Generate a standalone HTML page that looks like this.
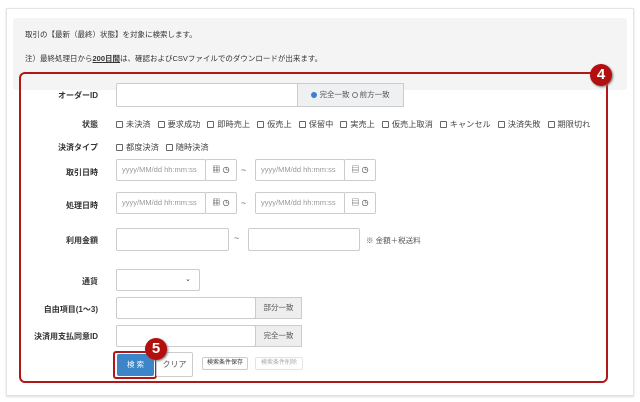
<html><head><style>
*{box-sizing:border-box;margin:0;padding:0}
body{width:640px;height:402px;background:#fff;font-family:"Liberation Sans","Noto Sans CJK JP",sans-serif;color:#333;position:relative;overflow:hidden;font-size:8px}
.a{position:absolute}
.panel{left:6px;top:8px;width:628px;height:388px;border:1px solid #e4e4e4;box-shadow:0 1px 2px #ddd}
.info{left:13px;top:18px;width:614px;height:72px;background:#f4f4f4;border-radius:3px}
.red{left:19px;top:72px;width:589px;height:311px;border:2px solid #b01818;border-radius:6px}
.badge{width:22px;height:22px;border-radius:50%;background:#b30f0f;color:#fff;font-weight:bold;font-size:15px;text-align:center;line-height:22px;box-shadow:1px 1px 2px #777}
.lbl{width:80px;text-align:right;left:18px;font-size:8px;font-weight:bold;color:#333}
.in{border:1px solid #ccc;background:#fff;border-radius:2px}
.add{border:1px solid #ccc;background:#eee;color:#555;font-size:7.5px;text-align:center}
.ph{color:#999;font-size:7.5px;padding-left:5px}
.cb{display:inline-block;width:7px;height:7px;border:1px solid #666;border-radius:1px;margin:0 3px 0 7px;vertical-align:-1px}
.row{font-size:8.2px;color:#444}
</style></head><body>
<div class="a panel"></div>
<div class="a info"></div>
<div class="a" style="left:25px;top:29px;font-size:7.5px">取引の【最新（最終）状態】を対象に検索します。</div>
<div class="a" style="left:25px;top:53px;font-size:7.5px">注）最終処理日から<b style="text-decoration:underline">200日間</b>は、確認およびCSVファイルでのダウンロードが出来ます。</div>
<div class="a red"></div>
<div class="a badge" style="left:590px;top:64px">4</div>

<div class="a lbl" style="top:90px">オーダーID</div>
<div class="a in" style="left:116px;top:83px;width:182px;height:24px"></div>
<div class="a add" style="left:297px;top:83px;width:107px;height:24px;line-height:22px;background:#eef0f2"><span style="display:inline-block;width:6px;height:6px;border-radius:50%;background:#3a7fd0;vertical-align:-1px"></span> 完全一致 <span style="display:inline-block;width:6px;height:6px;border-radius:50%;border:1px solid #777;vertical-align:-1px"></span> 前方一致</div>

<div class="a lbl" style="top:119px">状態</div>
<div class="a row" style="left:109px;top:118px"><span class="cb"></span>未決済<span class="cb"></span>要求成功<span class="cb"></span>即時売上<span class="cb"></span>仮売上<span class="cb"></span>保留中<span class="cb"></span>実売上<span class="cb"></span>仮売上取消<span class="cb"></span>キャンセル<span class="cb"></span>決済失敗<span class="cb"></span>期限切れ</div>

<div class="a lbl" style="top:142px">決済タイプ</div>
<div class="a row" style="left:109px;top:141px"><span class="cb"></span>都度決済<span class="cb"></span>随時決済</div>

<div class="a lbl" style="top:167px">取引日時</div>
<div class="a in ph" style="left:116px;top:159px;width:90px;height:22px;line-height:20px">yyyy/MM/dd hh:mm:ss</div>
<div class="a in" style="left:205px;top:159px;width:32px;height:22px;font-size:8px;line-height:20px;text-align:center">▦ ◷</div>
<div class="a" style="left:241px;top:165px;font-size:9px;color:#666">~</div>
<div class="a in ph" style="left:255px;top:159px;width:90px;height:22px;line-height:20px">yyyy/MM/dd hh:mm:ss</div>
<div class="a in" style="left:344px;top:159px;width:32px;height:22px;font-size:8px;line-height:20px;text-align:center">▤ ◷</div>

<div class="a lbl" style="top:200px">処理日時</div>
<div class="a in ph" style="left:116px;top:192px;width:90px;height:22px;line-height:20px">yyyy/MM/dd hh:mm:ss</div>
<div class="a in" style="left:205px;top:192px;width:32px;height:22px;font-size:8px;line-height:20px;text-align:center">▦ ◷</div>
<div class="a" style="left:241px;top:198px;font-size:9px;color:#666">~</div>
<div class="a in ph" style="left:255px;top:192px;width:90px;height:22px;line-height:20px">yyyy/MM/dd hh:mm:ss</div>
<div class="a in" style="left:344px;top:192px;width:32px;height:22px;font-size:8px;line-height:20px;text-align:center">▤ ◷</div>

<div class="a lbl" style="top:235px">利用金額</div>
<div class="a in" style="left:116px;top:228px;width:113px;height:23px"></div>
<div class="a" style="left:234px;top:233px;font-size:9px;color:#666">~</div>
<div class="a in" style="left:248px;top:228px;width:112px;height:23px"></div>
<div class="a" style="left:366px;top:235px;font-size:7.5px;color:#555">※ 金額＋税送料</div>

<div class="a lbl" style="top:276px">通貨</div>
<div class="a in" style="left:116px;top:269px;width:84px;height:22px;font-size:7px;text-align:right;padding-right:8px;line-height:20px">⌄</div>

<div class="a lbl" style="top:304px">自由項目(1～3)</div>
<div class="a in" style="left:116px;top:297px;width:140px;height:22px"></div>
<div class="a add" style="left:255px;top:297px;width:47px;height:22px;line-height:20px">部分一致</div>

<div class="a lbl" style="top:331px">決済用支払同意ID</div>
<div class="a in" style="left:116px;top:325px;width:140px;height:22px"></div>
<div class="a add" style="left:255px;top:325px;width:47px;height:22px;line-height:20px">完全一致</div>

<div class="a" style="left:113px;top:351px;width:44px;height:28px;border:2px solid #b01818;border-radius:3px"></div>
<div class="a" style="left:117px;top:354px;width:37px;height:22px;background:#3c85c8;color:#fff;font-size:7.5px;text-align:center;line-height:22px;border-radius:2px">検 索</div>
<div class="a in" style="left:156px;top:352px;width:37px;height:25px;font-size:8px;text-align:center;line-height:23px;color:#555">クリア</div>
<div class="a in" style="left:202px;top:357px;width:46px;height:13px;font-size:6px;text-align:center;line-height:11px">検索条件保存</div>
<div class="a in" style="left:255px;top:357px;width:48px;height:13px;font-size:6px;text-align:center;line-height:11px;color:#aaa;border-color:#e4e4e4">検索条件削除</div>
<div class="a badge" style="left:145px;top:338px">5</div>
</body></html>
